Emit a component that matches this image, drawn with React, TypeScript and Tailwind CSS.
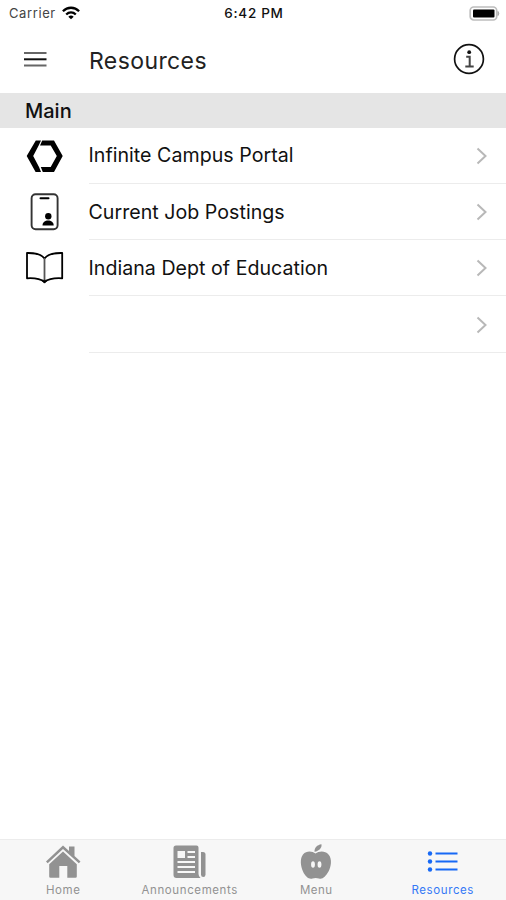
import type { ReactNode } from "react"
import clsx from "clsx"

interface Resource {
  label: string
  icon?: ReactNode
}

interface Tab {
  label: string
  icon: ReactNode
  spacing: string
  active?: boolean
}

function CampusIcon() {
  return (
    <svg viewBox="0 0 40 40" className="h-10 w-10" fill="black">
      <path d="M11.8 4.5H17L14.8 9.3L9.2 20L15 31L17 36H11.6L2.7 20Z" />
      <path d="M18.2 4.5H30L38.7 20L30 36H18.8L16.8 31H26.7L32.8 20L26.7 9.5H16Z" />
    </svg>
  )
}

function BadgeIcon() {
  return (
    <svg viewBox="0 0 40 40" className="h-10 w-10" fill="none" stroke="black">
      <rect x="7.6" y="2.3" width="26" height="35" rx="4" stroke="#333" strokeWidth="1.9" />
      <path d="M16.5 6.2h8" strokeWidth="2" strokeLinecap="round" />
      <circle cx="24.3" cy="24.3" r="3.2" fill="black" stroke="none" />
      <path d="M18.5 33.5c0-3.2 2.6-5 5.6-5s5.6 1.8 5.6 5z" fill="black" stroke="none" />
    </svg>
  )
}

function BookIcon() {
  return (
    <svg viewBox="0 0 40 40" className="h-10 w-10" fill="none" stroke="black" strokeWidth="1.8" strokeLinejoin="round">
      <path d="M20.5 10.5C17.5 6.5 11 4.8 3 5V30.3C11 29.8 16.5 30.8 20.5 34C24.5 30.8 30 29.8 38.2 30.3V5C30 4.8 23.5 6.5 20.5 10.5Z" />
      <path d="M20.5 10V34" stroke="#555" />
      <path d="M17.5 32.2h6l-3 3z" fill="black" strokeWidth="0.5" />
    </svg>
  )
}

function HomeIcon() {
  return (
    <svg viewBox="0 0 38 38" className="h-[38px] w-[38px]" fill="#929292">
      <path d="M2 18.5L19 2.5L25 8V3.5h5.5v9.5l6 5.5l-1.7 1.8L19 6L3.7 20.3Z" />
      <path d="M5.2 21.3L19 8.5L32.8 21.3V33.5q0 1.3-1.3 1.3H23.3V23H15.3V34.8H6.5q-1.3 0-1.3-1.3Z" />
    </svg>
  )
}

function NewsIcon() {
  return (
    <svg viewBox="0 0 38 38" className="h-[38px] w-[38px]" fill="none">
      <path d="M5 2.500H25.500q2 0 2 2V31q0 2 2 4H5.500q-3 0-3-3V5Q2.500 2.500 5 2.500Z" fill="#929292" />
      <path d="M30 9h2q2.500 0 2.500 2.500V31.500q0 2.500-2.200 2.500T30 31.500Z" fill="#929292" />
      <path d="M6.500 8h7.500v7h-7.500z" fill="#f7f7f7" />
      <path d="M16.500 9h7.500M16.500 14h7.500M6.500 19h17.500M6.500 24h17.500M6.500 29h17.500" stroke="#f7f7f7" strokeWidth="1.9" />
    </svg>
  )
}

function AppleIcon() {
  return (
    <svg viewBox="0 0 38 38" className="h-[38px] w-[38px]" fill="#929292">
      <path d="M17.500 8.700C17.300 4.500 20 1.900 24.500 1.200C25 5 22 8 17.500 8.700Z" />
      <path d="M18.500 10.500C22 8 28 7.500 31.500 11.500C35.500 16 34 24 31.500 28.500C28.500 34 25.500 36.500 22 35.500Q18.500 34.500 15.500 35.500C12 36.500 8.500 34 6 28.500C3.500 23 2.800 15.500 6 11.500C9.500 7.500 15 8 18.500 10.500Z" />
      <ellipse cx="16" cy="21.500" rx="1.900" ry="3.300" fill="#f7f7f7" />
      <ellipse cx="22.500" cy="21.500" rx="1.900" ry="3.300" fill="#f7f7f7" />
    </svg>
  )
}

function ListIcon() {
  return (
    <svg viewBox="0 0 38 38" className="h-[38px] w-[38px]" fill="#1769f5">
      <circle cx="6" cy="10.500" r="2.200" />
      <circle cx="6" cy="18.500" r="2.200" />
      <circle cx="6" cy="26.500" r="2.200" />
      <path d="M11.500 9.500h22v2h-22zM11.500 17.500h22v2h-22zM11.500 25.500h22v2h-22z" />
    </svg>
  )
}

const resources: Resource[] = [
  { label: "Infinite Campus Portal", icon: <CampusIcon /> },
  { label: "Current Job Postings", icon: <BadgeIcon /> },
  { label: "Indiana Dept of Education", icon: <BookIcon /> },
  { label: "" },
]

const tabs: Tab[] = [
  { label: "Home", icon: <HomeIcon />, spacing: "tracking-[0.6px]" },
  { label: "Announcements", icon: <NewsIcon />, spacing: "tracking-[0.6px]" },
  { label: "Menu", icon: <AppleIcon />, spacing: "tracking-[0.5px]" },
  { label: "Resources", icon: <ListIcon />, spacing: "tracking-[0.6px]", active: true },
]

function StatusBar() {
  return (
    <div className="grid h-[26px] grid-cols-3 items-center pl-[9px] pr-[6px] text-[13px] leading-none">
      <div className="flex items-center gap-[6px]">
        <span className="tracking-[0.6px] text-[#444]">Carrier</span>
        <svg viewBox="0 0 18 14" className="h-[14px] w-[18px]" fill="none" stroke="black" strokeWidth="2.3">
          <path d="M0.9 5.2C5.5 0.6 12.5 0.6 17.1 5.2" />
          <path d="M4.2 8.5C7 5.7 11 5.7 13.8 8.5" />
          <path d="M9 13.2L6.3 10.7Q9 8.3 11.7 10.7Z" fill="black" stroke="none" />
        </svg>
      </div>
      <span className="pr-px pt-[2px] text-center text-[13.5px] font-medium tracking-[0.7px]">6:42 PM</span>
      <svg viewBox="0 0 31 15" className="h-[15px] w-[31px] justify-self-end">
        <rect x="1.2" y="1" width="26.5" height="13" rx="3.5" fill="white" stroke="#bdbdbd" strokeWidth="1.7" />
        <rect x="4" y="3.5" width="21.5" height="8" rx="1" fill="black" />
        <path d="M29 5.5q1.5 2 0 4z" fill="#aaa" stroke="#aaa" />
      </svg>
    </div>
  )
}

export default function App() {
  return (
    <div className="flex h-[900px] w-[506px] flex-col bg-white font-['Inter',sans-serif] text-[#111]">
      <StatusBar />

      {/* Title bar */}
      <header className="flex h-[66.5px] items-center pl-[23.5px] pr-[21px]">
        <svg viewBox="0 0 23 17" className="h-[17px] w-[23px]" fill="none">
          <path d="M0 2h22.5M0 14.5h22.5" stroke="#666" strokeWidth="2" />
          <path d="M0 8.3h22.5" stroke="#111" strokeWidth="2" />
        </svg>
        <h1 className="ml-[42.5px] flex-1 pt-[3px] text-[23px] tracking-[0.4px] text-[#222]">Resources</h1>
        <svg viewBox="0 0 32 32" className="-mt-px h-8 w-8" fill="none" stroke="#111">
          <circle cx="16" cy="16" r="14.4" strokeWidth="1.7" />
          <circle cx="16.2" cy="9.2" r="1.9" fill="#111" stroke="none" />
          <path d="M13.2 13.8h3.5v9.5M12.3 23.5h8.400" strokeWidth="2" stroke="#444" />
        </svg>
      </header>

      <h2 className="flex h-[35px] items-center bg-[#e5e5e5] pl-[25px] pt-[2px] text-[20px] font-medium">Main</h2>

      <ul className="flex-1">
        {resources.map((item, index) => (
          <li key={index} className="flex h-[56.3px] pl-6">
            <div className="flex w-[64.5px] items-center">{item.icon}</div>
            <div className="flex flex-1 items-center justify-between border-b border-[#ececec] pr-[18px]">
              <span className="pt-[2px] text-[19.6px] tracking-[0.03px]">{item.label}</span>
              <svg viewBox="0 0 12 18" className="mt-px h-[18px] w-3" fill="none" stroke="#b8b8b8" strokeWidth="2">
                <path d="M1.5 1.5L9.5 9L1.5 16.5" />
              </svg>
            </div>
          </li>
        ))}
      </ul>

      <nav className="grid h-[61px] grid-cols-4 border-t border-[#ececec] bg-[#f7f7f7]">
        {tabs.map((tab) => (
          <div
            key={tab.label}
            className={clsx("flex flex-col items-center pt-[3px]", tab.active ? "text-[#3478f6]" : "text-[#929292]")}
          >
            {tab.icon}
            <span className={clsx("mt-[2px] text-[11.5px] leading-[14px]", tab.spacing)}>{tab.label}</span>
          </div>
        ))}
      </nav>
    </div>
  )
}
